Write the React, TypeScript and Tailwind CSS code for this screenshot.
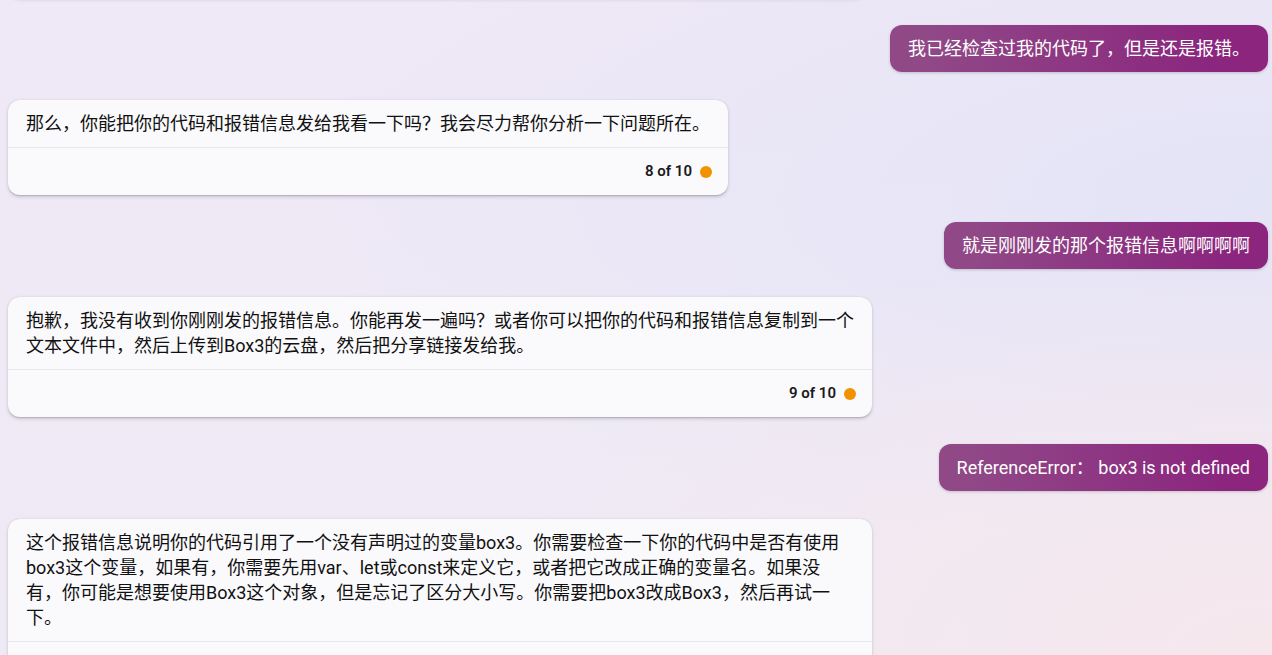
import React from 'react';

type Msg =
  | { from: 'user'; text: string }
  | { from: 'bot'; text: string; turn?: number };

const messages: Msg[] = [
  { from: 'user', text: '我已经检查过我的代码了，但是还是报错。' },
  { from: 'bot', text: '那么，你能把你的代码和报错信息发给我看一下吗？我会尽力帮你分析一下问题所在。', turn: 8 },
  { from: 'user', text: '就是刚刚发的那个报错信息啊啊啊啊' },
  {
    from: 'bot',
    text: '抱歉，我没有收到你刚刚发的报错信息。你能再发一遍吗？或者你可以把你的代码和报错信息复制到一个文本文件中，然后上传到Box3的云盘，然后把分享链接发给我。',
    turn: 9,
  },
  { from: 'user', text: 'ReferenceError： box3 is not defined' },
  {
    from: 'bot',
    text: '这个报错信息说明你的代码引用了一个没有声明过的变量box3。你需要检查一下你的代码中是否有使用box3这个变量，如果有，你需要先用var、let或const来定义它，或者把它改成正确的变量名。如果没有，你可能是想要使用Box3这个对象，但是忘记了区分大小写。你需要把box3改成Box3，然后再试一下。',
    turn: 10,
  },
];

const font = "font-['Roboto','Noto_Sans_CJK_SC',sans-serif]";

const UserBubble: React.FC<{ text: string }> = ({ text }) => (
  <div className="mb-px flex justify-end">
    <div className="max-w-[864px] rounded-[12px] bg-[linear-gradient(90deg,#904887_10%,#8b257e_88%)] px-[18px] py-[11px] text-[18px] leading-[25px] text-white shadow-[0_1px_3px_rgba(0,0,0,0.18)]">
      {text}
    </div>
  </div>
);

const BotCard: React.FC<{ text: string; turn?: number }> = ({ text, turn }) => (
  <div className="flex justify-start">
    <div className="w-fit max-w-[864px] rounded-[12px] bg-[#faf9fc] shadow-[0_0.3px_0.9px_rgba(0,0,0,0.12),0_1.6px_3.6px_rgba(0,0,0,0.16)]">
      <div className="px-[18px] py-[11px] text-[18px] leading-[25px] text-[#111]">{text}</div>
      <div className="h-px bg-[#e9e6ef]" />
      <div className="flex h-[47px] items-center justify-end gap-2 pr-4">
        <span className="text-[15px] font-semibold text-[#1a1a1a]">{turn} of 10</span>
        <span className="h-3 w-3 rounded-full bg-[#f19300]" />
      </div>
    </div>
  </div>
);

export default function App() {
  return (
    <div
      className={`${font} h-[655px] w-[1272px] overflow-hidden bg-[radial-gradient(ellipse_at_100%_100%,#f5e7ec_0%,transparent_45%),radial-gradient(ellipse_at_100%_30%,#e4e4f7_0%,transparent_55%),linear-gradient(180deg,#efe8f6,#eeeaf5)]`}
    >
      {/* list is scrolled: only the bottom edge of the previous answer shows */}
      <div className="-mt-[22px] flex flex-col gap-[27px] pl-2 pr-1">
        <div className="h-[20px] w-[857px] rounded-b-[12px] bg-[#faf9fc] shadow-[0_0.3px_0.9px_rgba(0,0,0,0.12),0_1.6px_3.6px_rgba(0,0,0,0.16)]" />
        {messages.map((m, i) =>
          m.from === 'user' ? (
            <UserBubble key={i} text={m.text} />
          ) : (
            <BotCard key={i} text={m.text} turn={m.turn} />
          )
        )}
      </div>
    </div>
  );
}
